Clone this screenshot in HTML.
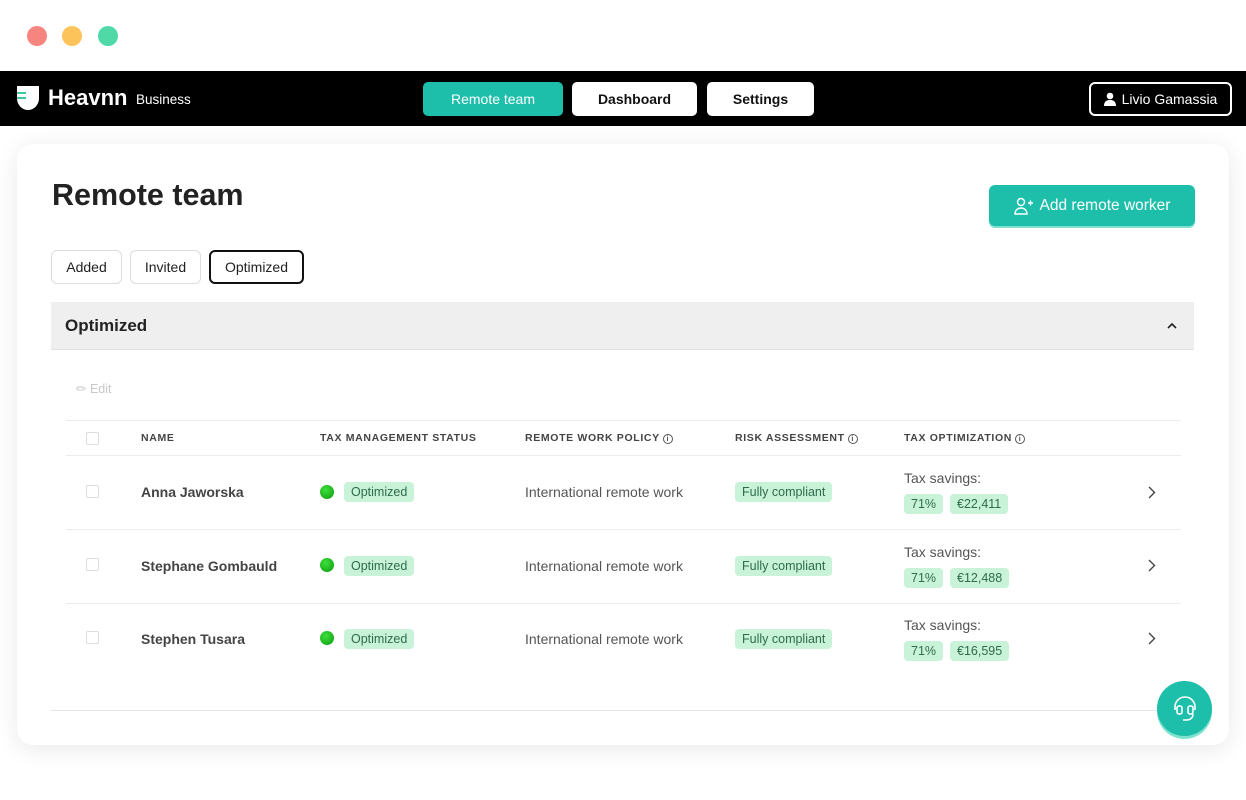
<!DOCTYPE html>
<html><head><meta charset="utf-8"><style>
*{box-sizing:border-box;margin:0;padding:0}
body{width:1246px;height:800px;background:#fff;font-family:"Liberation Sans",sans-serif;position:relative;overflow:hidden;color:#222}
.a{position:absolute}
.dot{width:20px;height:20px;border-radius:50%;top:26px}
.nav{left:0;top:71px;width:1246px;height:55px;background:#000}
.btn{top:82px;height:34px;border-radius:5px;background:#fff;color:#111;font-size:14px;font-weight:bold;display:flex;align-items:center;justify-content:center}
.card{left:17px;top:144px;width:1212px;height:601px;background:#fff;border-radius:16px;box-shadow:0 4px 24px rgba(0,0,0,.09)}
.tab{top:250px;height:34px;border:1px solid #ddd;border-radius:6px;font-size:14px;display:flex;align-items:center;justify-content:center;color:#222}
.hl{height:1px;background:#ececec;left:66px;width:1115px}
.th{top:432px;font-size:10.5px;font-weight:bold;letter-spacing:0.65px;color:#444}
.cb{width:13px;height:13px;border:1px solid #ddd;border-radius:2px;left:86px}
.nm{left:141px;font-size:14px;font-weight:bold;color:#444}
.gd{left:320px;width:14px;height:14px;border-radius:50%;background:radial-gradient(circle at 40% 35%,#3ee03e,#0a9a0a)}
.pill{background:#c9f3d9;color:#2e6b48;font-size:12.5px;border-radius:4px;padding:3px 7px}
.pol{left:525px;font-size:14px;color:#555}
.ts{left:904px;font-size:14px;color:#555}
.chev{left:1148px}
.i{display:inline-block;width:10px;height:10px;border:1px solid #555;border-radius:50%;font-size:7px;text-align:center;line-height:9px;margin-left:3px;vertical-align:0}
</style></head><body>
<div class="a dot" style="left:27px;background:#f7857f"></div>
<div class="a dot" style="left:62px;background:#fcc35a"></div>
<div class="a dot" style="left:98px;background:#4fd9a6"></div>
<div class="a nav"></div>
<svg class="a" style="left:16px;top:85px" width="24" height="26" viewBox="0 0 24 26"><path d="M1 1h22v12c0 7-5 12-11 12S1 20 1 13z" fill="#fff"/><path d="M1 8h9M1 13h9" stroke="#3cc9a0" stroke-width="2"/></svg>
<div class="a" style="left:48px;top:85px;color:#fff;font-size:22px;font-weight:bold">Heavnn</div>
<div class="a" style="left:136px;top:92px;color:#fff;font-size:13.5px">Business</div>
<div class="a btn" style="left:423px;width:140px;background:#1dbfaa;color:#fff;font-weight:normal">Remote team</div>
<div class="a btn" style="left:572px;width:125px">Dashboard</div>
<div class="a btn" style="left:707px;width:107px">Settings</div>
<div class="a" style="left:1089px;top:82px;width:143px;height:34px;border:2px solid #fff;border-radius:6px;color:#fff;font-size:14px;display:flex;align-items:center;justify-content:center;gap:6px"><svg width="12" height="14" viewBox="0 0 12 14"><circle cx="6" cy="4" r="3.3" fill="#fff"/><path d="M0 14c0-5 3-6 6-6s6 1 6 6z" fill="#fff"/></svg>Livio Gamassia</div>
<div class="a card"></div>
<div class="a" style="left:52px;top:178px;font-size:30.5px;font-weight:bold;color:#222">Remote team</div>
<div class="a" style="left:989px;top:185px;width:206px;height:41px;background:#1dbfaa;border-radius:6px;box-shadow:0 2px 0 #7ee2cf;color:#fff;font-size:15.5px;display:flex;align-items:center;justify-content:center;gap:6px"><svg width="20" height="18" viewBox="0 0 20 18" fill="none" stroke="#fff" stroke-width="1.4"><circle cx="7" cy="5" r="3.5"/><path d="M1 17c0-4 3-6 6-6s6 2 6 6z"/><path d="M14 6h5M16.5 3.5v5"/></svg>Add remote worker</div>
<div class="a tab" style="left:51px;width:71px">Added</div>
<div class="a tab" style="left:130px;width:71px">Invited</div>
<div class="a tab" style="left:209px;width:95px;border:2px solid #111">Optimized</div>
<div class="a" style="left:51px;top:302px;width:1143px;height:48px;background:#efefef;border-bottom:1px solid #e2e2e2"></div>
<div class="a" style="left:65px;top:316px;font-size:17px;font-weight:bold;color:#222">Optimized</div>
<svg class="a" style="left:1167px;top:322px" width="10" height="7" viewBox="0 0 10 7" fill="none" stroke="#222" stroke-width="1.6"><path d="M1 6l4-4 4 4"/></svg>
<div class="a" style="left:76px;top:381px;font-size:12.5px;color:#c8c8c8">&#9999;&#xFE0E; Edit</div>
<div class="a hl" style="top:420px"></div>
<div class="a cb" style="top:432px"></div>
<div class="a th" style="left:141px">NAME</div>
<div class="a th" style="left:320px">TAX MANAGEMENT STATUS</div>
<div class="a th" style="left:525px">REMOTE WORK POLICY<span class="i">i</span></div>
<div class="a th" style="left:735px">RISK ASSESSMENT<span class="i">i</span></div>
<div class="a th" style="left:904px">TAX OPTIMIZATION<span class="i">i</span></div>
<div class="a hl" style="top:455px"></div>
<div class="a hl" style="top:529px"></div>
<div class="a hl" style="top:603px"></div>
<div class="a" style="left:51px;top:710px;width:1143px;height:1px;background:#e6e6e6"></div>

<div class="a cb" style="top:485px"></div><div class="a nm" style="top:484px">Anna Jaworska</div><div class="a gd" style="top:485px"></div><div class="a pill" style="left:344px;top:482px">Optimized</div><div class="a pol" style="top:484px">International remote work</div><div class="a pill" style="left:735px;top:482px">Fully compliant</div><div class="a ts" style="top:470px">Tax savings:</div><div class="a pill" style="left:904px;top:494px">71%</div><div class="a pill" style="left:950px;top:494px">€22,411</div><svg class="a chev" style="top:486px" width="8" height="13" viewBox="0 0 8 13" fill="none" stroke="#444" stroke-width="1.4"><path d="M1 1l5.5 5.5L1 12"/></svg>

<div class="a cb" style="top:558px"></div><div class="a nm" style="top:558px">Stephane Gombauld</div><div class="a gd" style="top:558px"></div><div class="a pill" style="left:344px;top:556px">Optimized</div><div class="a pol" style="top:558px">International remote work</div><div class="a pill" style="left:735px;top:556px">Fully compliant</div><div class="a ts" style="top:544px">Tax savings:</div><div class="a pill" style="left:904px;top:568px">71%</div><div class="a pill" style="left:950px;top:568px">€12,488</div><svg class="a chev" style="top:559px" width="8" height="13" viewBox="0 0 8 13" fill="none" stroke="#444" stroke-width="1.4"><path d="M1 1l5.5 5.5L1 12"/></svg>

<div class="a cb" style="top:631px"></div><div class="a nm" style="top:631px">Stephen Tusara</div><div class="a gd" style="top:631px"></div><div class="a pill" style="left:344px;top:629px">Optimized</div><div class="a pol" style="top:631px">International remote work</div><div class="a pill" style="left:735px;top:629px">Fully compliant</div><div class="a ts" style="top:617px">Tax savings:</div><div class="a pill" style="left:904px;top:641px">71%</div><div class="a pill" style="left:950px;top:641px">€16,595</div><svg class="a chev" style="top:632px" width="8" height="13" viewBox="0 0 8 13" fill="none" stroke="#444" stroke-width="1.4"><path d="M1 1l5.5 5.5L1 12"/></svg>

<div class="a" style="left:1157px;top:681px;width:55px;height:55px;border-radius:50%;background:#1dbfaa;box-shadow:0 3px 0 #7ee2cf"></div>
<svg class="a" style="left:1171px;top:694px" width="28" height="30" viewBox="0 0 28 30" fill="none" stroke="#fff" stroke-width="1.6"><path d="M4 16v-3a10 10 0 0 1 20 0v3"/><rect x="6" y="12" width="5" height="8" rx="2"/><rect x="17" y="12" width="5" height="8" rx="2"/><path d="M22 20c0 4-3 6-7 6h-3"/></svg>
</body></html>
